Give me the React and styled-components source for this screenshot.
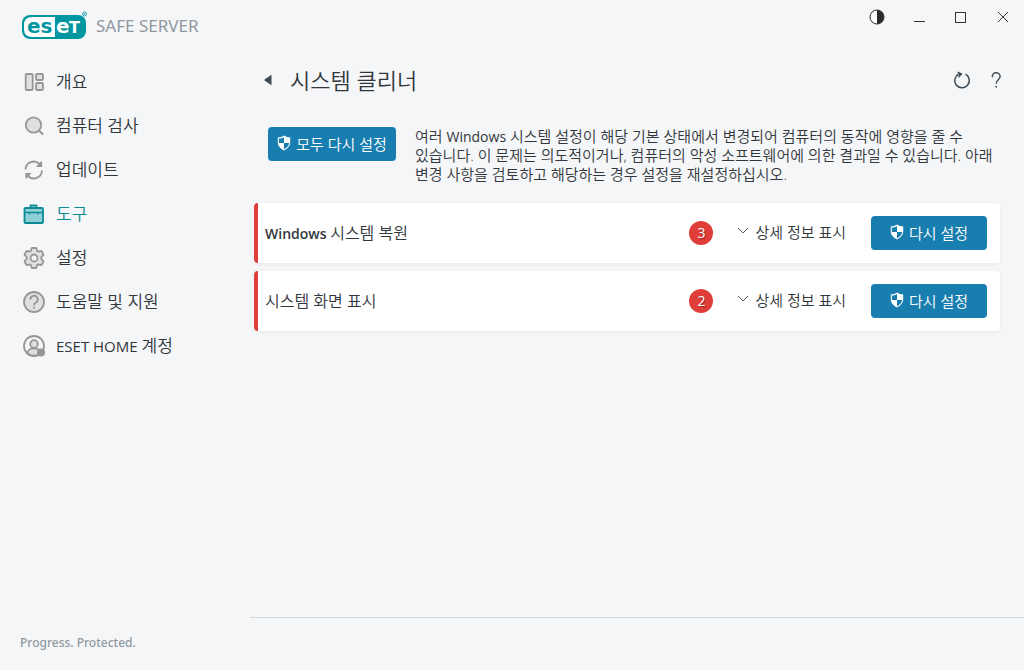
import React from 'react';
import styled, { createGlobalStyle } from 'styled-components';

const navItems = [
  { label: '개요', icon: OverviewIcon },
  { label: '컴퓨터 검사', icon: ScanIcon },
  { label: '업데이트', icon: UpdateIcon },
  { label: '도구', icon: ToolsIcon, active: true },
  { label: '설정', icon: SettingsIcon },
  { label: '도움말 및 지원', icon: SupportIcon },
  { latin: 'ESET HOME', label: '계정', icon: AccountIcon },
];

const groups = [
  { id: 'restore', latin: 'Windows', name: '시스템 복원', count: 3 },
  { id: 'display', name: '시스템 화면 표시', count: 2 },
];

function App() {
  return (
    <>
      <GlobalStyle />
      <Window>
        <TitleBar>
          <Brand>
            <Logo />
            <Product>SAFE SERVER</Product>
          </Brand>
          <WindowControls>
            <WindowButton aria-label="테마">
              <svg width="16" height="16" viewBox="0 0 16 16">
                <circle cx="8" cy="8" r="7" fill="#fff" stroke="#2b2b2b" />
                <path d="M8 1a7 7 0 0 1 0 14z" fill="#2b2b2b" />
              </svg>
            </WindowButton>
            <WindowButton aria-label="최소화">
              <svg width="12" height="12" viewBox="0 0 12 12">
                <path d="M1 10.5h11" stroke="#333" />
              </svg>
            </WindowButton>
            <WindowButton aria-label="최대화">
              <svg width="12" height="12" viewBox="0 0 12 12">
                <rect x=".5" y="1.5" width="10" height="10" fill="none" stroke="#333" />
              </svg>
            </WindowButton>
            <WindowButton aria-label="닫기">
              <svg width="12" height="12" viewBox="0 0 12 12">
                <path d="M1 1l10 10M11 1L1 11" stroke="#333" />
              </svg>
            </WindowButton>
          </WindowControls>
        </TitleBar>
        <Body>
          <Sidebar>
            <Nav>
              {navItems.map(({ latin, label, icon: Icon, active }) => (
                <NavLink key={label} href="#" $active={active}>
                  <Icon />
                  <span>
                    {latin && <Latin $size={15}>{latin} </Latin>}
                    {label}
                  </span>
                </NavLink>
              ))}
            </Nav>
            <Slogan>Progress. Protected.</Slogan>
          </Sidebar>
          <Main>
            <PageHead>
              <BackButton aria-label="뒤로">
                <svg width="8" height="12" viewBox="0 0 8 12">
                  <path d="M7.5 .8v10.4L.6 6.6q-.6-.6 0-1.2z" fill="#3b4a54" />
                </svg>
              </BackButton>
              <Title>시스템 클리너</Title>
              <HeadButton aria-label="새로 고침">
                <svg width="20" height="20" viewBox="0 0 20 20" fill="none" stroke="#3b4a54" strokeWidth="1.5">
                  <path d="M13.6 4.2A7.3 7.3 0 1 1 6.8 4" />
                  <path d="M5.5 2l4 2-3 3.2" strokeWidth="1.3" />
                  <path d="M6.3 2.6l3.2 1.4-2.2 2.3z" fill="#3b4a54" stroke="none" />
                </svg>
              </HeadButton>
              <HeadButton aria-label="도움말">
                <svg width="12" height="18" viewBox="0 0 12 18" fill="none" stroke="#3b4a54" strokeWidth="1.4">
                  <path d="M2.3 6.2v-.6a3.9 3.9 0 0 1 7.8 0c0 3-3.9 3.4-3.9 6.8v.4" />
                  <path d="M6.2 15v1.6" strokeWidth="1.6" />
                </svg>
              </HeadButton>
            </PageHead>
            <Intro>
              <Button>
                <ShieldIcon />
                모두 다시 설정
              </Button>
              <Description>
                여러 <Latin $size={14}>Windows</Latin> 시스템 설정이 해당 기본 상태에서 변경되어 컴퓨터의 동작에 영향을 줄 수
                있습니다. 이 문제는 의도적이거나, 컴퓨터의 악성 소프트웨어에 의한 결과일 수 있습니다. 아래
                변경 사항을 검토하고 해당하는 경우 설정을 재설정하십시오.
              </Description>
            </Intro>
            <Cards>
              {groups.map((group) => (
                <Card key={group.id}>
                  <CardName>
                    {group.latin && <strong>{group.latin} </strong>}
                    {group.name}
                  </CardName>
                  <Count>{group.count}</Count>
                  <DetailsButton>
                    <svg width="12" height="8" viewBox="0 0 12 8">
                      <path d="M1 1l5 5 5-5" fill="none" stroke="#5c6166" />
                    </svg>
                    상세 정보 표시
                  </DetailsButton>
                  <Button $wide>
                    <ShieldIcon />
                    다시 설정
                  </Button>
                </Card>
              ))}
            </Cards>
            <Footer />
          </Main>
        </Body>
      </Window>
    </>
  );
}

export default App;

function Logo() {
  return (
    <svg width="66" height="32" viewBox="0 0 66 32" role="img" aria-label="eset">
      <rect x="0" y="5" width="64" height="24" rx="8" fill="#0096a1" />
      <path d="M33 7H10q-8 0-8 8v4q0 8 8 8h23z" fill="#fff" />
      <g fontFamily="'DejaVu Sans', sans-serif" fontWeight="700" fontSize="20">
        <text x="5" y="23" fill="#0096a1">es</text>
        <text x="34" y="23" fill="#fff">e</text>
        <text x="47" y="23" fill="#fff" fontSize="16">T</text>
      </g>
      <circle cx="62.5" cy="4" r="2" fill="none" stroke="#0096a1" strokeWidth=".8" />
      <circle cx="62.5" cy="4" r=".8" fill="#0096a1" />
    </svg>
  );
}

function ShieldIcon() {
  return (
    <svg width="14" height="16" viewBox="0 0 14 16">
      <path d="M7 .6C5.2 1.9 3 2.5 .8 2.6v5c0 3.5 2.6 6.2 6.2 7.8 3.6-1.6 6.2-4.3 6.2-7.8v-5C11 2.5 8.8 1.9 7 .6z" fill="#fff" />
      <path d="M7 2v6H1.9V3.6C3.7 3.5 5.5 3 7 2z" fill="#187eb0" />
      <path d="M7 8h5.1c-.2 2.7-2.2 4.8-5.1 6.200z" fill="#187eb0" />
    </svg>
  );
}

function OverviewIcon() {
  return (
    <NavIcon viewBox="0 0 24 24">
      <rect x="3.7" y="4" width="7" height="16" rx="1" />
      <rect x="14" y="4" width="7" height="6" rx="1" />
      <rect x="14" y="13" width="7" height="7" rx="1" />
    </NavIcon>
  );
}

function ScanIcon() {
  return (
    <NavIcon viewBox="0 0 24 24">
      <circle cx="11.5" cy="11" r="7.7" />
      <path d="M17 16.5l4 4" strokeWidth="2.2" />
    </NavIcon>
  );
}

function UpdateIcon() {
  return (
    <NavIcon viewBox="0 0 24 24">
      <path d="M3.5 11.5A8.2 8.2 0 0 1 17.5 6M20 12.5A8.2 8.2 0 0 1 6 18" fill="none" />
      <path d="M19.5 4v4.5H15zM4 20v-4.500h4.500z" fill="#969696" strokeWidth="1.2" />
    </NavIcon>
  );
}

function ToolsIcon() {
  return (
    <NavIcon viewBox="0 0 24 24" $active>
      <path d="M8.5 6V3.500h6V6" fill="none" />
      <rect x="2.5" y="6" width="18.500" height="15" rx="1" />
      <path d="M2.5 10.5h18.500M7.500 10.500v2M16 10.500v2" strokeWidth="1.3" />
    </NavIcon>
  );
}

function SettingsIcon() {
  return (
    <NavIcon viewBox="0 0 24 24">
      <path d="M10.200 2h3.600q.7 0 .8.700l.4 2.200 1.500.8 2.100-.8q.7-.2 1 .4l1.700 3q.3.600-.2 1l-1.700 1.500v2.400l1.700 1.500q.5.400.2 1l-1.700 3q-.3.600-1 .4l-2.100-.8-1.500.8-.4 2.200q-.1.700-.8.700h-3.600q-.7 0-.8-.7L9 19.100l-1.500-.8-2.100.8q-.7.200-1-.4l-1.700-3q-.3-.6.200-1l1.700-1.500v-2.400L2.900 9.300q-.5-.4-.2-1l1.700-3q.3-.6 1-.4l2.100.8L9 4.900l.4-2.200q.1-.7.8-.7z" />
      <circle cx="12" cy="12" r="3.5" fill="#f5f6f8" />
    </NavIcon>
  );
}

function SupportIcon() {
  return (
    <NavIcon viewBox="0 0 24 24">
      <circle cx="12" cy="12" r="10" />
      <path d="M8.300 9.500a3.700 3.700 0 1 1 5.400 3.200c-1.200.6-1.700 1.100-1.700 2.500M12 16.800v1.600" fill="none" />
    </NavIcon>
  );
}

function AccountIcon() {
  return (
    <NavIcon viewBox="0 0 24 24">
      <circle cx="12" cy="12" r="10" fill="none" />
      <path d="M5.500 19.500c.2-3.200 2.600-5.200 6.500-5.200s6.300 2 6.500 5.200c-3.500 3-9.500 3-13 0z" />
      <circle cx="12" cy="10" r="3.800" />
      <circle cx="19" cy="18.500" r="4" fill="#969696" stroke="none" />
    </NavIcon>
  );
}

const GlobalStyle = createGlobalStyle`
  * {
    box-sizing: border-box;
  }

  body {
    margin: 0;
    background: #f5f6f8;
    color: #32373c;
    font-family: 'Open Sans', 'Noto Sans CJK KR', sans-serif;
    font-size: 15px;
    font-weight: 350;
  }

  button {
    padding: 0;
    border: 0;
    background: none;
    color: inherit;
    font: inherit;
    cursor: pointer;
  }
`;

const Window = styled.div`
  display: flex;
  flex-direction: column;
  min-height: 100vh;
`;

const TitleBar = styled.header`
  display: flex;
  justify-content: space-between;
  align-items: flex-start;
  height: 50px;
`;

const Brand = styled.div`
  display: flex;
  align-items: center;
  gap: 8px;
  padding: 9px 0 0 22px;
`;

const Product = styled.span`
  color: #90989f;
  font-family: 'Noto Sans', sans-serif;
  font-size: 17px;
  font-weight: 400;
  line-height: 34px;
`;

const WindowControls = styled.div`
  display: flex;
`;

const WindowButton = styled.button`
  display: flex;
  align-items: center;
  justify-content: center;
  width: 42px;
  height: 34px;

  &:hover {
    background: #e3e5e8;
  }
`;

const Body = styled.div`
  display: flex;
  flex: 1;
`;

const Sidebar = styled.aside`
  display: flex;
  flex-direction: column;
  justify-content: space-between;
  flex: 0 0 250px;
  padding: 10px 0 16px;
`;

const Nav = styled.nav`
  display: flex;
  flex-direction: column;
`;

const NavLink = styled.a`
  display: flex;
  align-items: center;
  gap: 10px;
  height: 44px;
  padding-left: 22px;
  color: ${(props) => (props.$active ? '#0b8a94' : 'inherit')};
  font-size: 17px;
  line-height: 22px;
  text-decoration: none;
`;

const NavIcon = styled.svg`
  width: 24px;
  height: 24px;
  fill: ${(props) => (props.$active ? '#8fd0d7' : '#dfe0e2')};
  stroke: ${(props) => (props.$active ? '#0b8a94' : '#969696')};
  stroke-width: 1.8;
  stroke-linejoin: round;
`;

const Latin = styled.span`
  font-size: ${(props) => props.$size}px;
  font-weight: 400;
  line-height: 1;
`;

const Slogan = styled.div`
  padding-left: 20px;
  color: #90989f;
  font-family: 'Noto Sans', sans-serif;
  font-size: 12px;
  font-weight: 500;
  line-height: 22px;
`;

const Main = styled.main`
  display: flex;
  flex-direction: column;
  flex: 1;
  min-width: 0;
  padding-top: 10px;
`;

const PageHead = styled.div`
  display: flex;
  align-items: center;
  height: 40px;
  padding: 0 11px 0 4px;
`;

const BackButton = styled.button`
  display: flex;
  align-items: center;
  justify-content: center;
  width: 28px;
  height: 28px;
`;

const Title = styled.h1`
  flex: 1;
  margin: 0;
  padding-left: 8px;
  font-size: 22px;
  font-weight: 350;
  line-height: 26px;
`;

const HeadButton = styled.button`
  display: flex;
  align-items: center;
  justify-content: center;
  width: 34px;
  height: 34px;
`;

const Intro = styled.div`
  display: flex;
  align-items: flex-start;
  gap: 19px;
  padding: 27px 20px 0 18px;
`;

const Button = styled.button`
  display: flex;
  align-items: center;
  justify-content: center;
  gap: 5px;
  flex: none;
  width: ${(props) => (props.$wide ? '116px' : '128px')};
  height: 34px;
  padding-bottom: 2px;
  border-radius: 4px;
  background: #187eb0;
  color: #fff;

  &:hover {
    background: #136a95;
  }
`;

const Description = styled.p`
  flex: 1;
  margin: 0;
  line-height: 19px;
  word-break: keep-all;
`;

const Cards = styled.div`
  display: flex;
  flex-direction: column;
  gap: 8px;
  padding: 19px 24px 0 4px;
`;

const Card = styled.section`
  display: flex;
  align-items: center;
  height: 60px;
  padding: 0 13px 0 7px;
  border-left: 4px solid #e03e38;
  border-radius: 4px;
  background: #fff;
  box-shadow: 0 1px 4px rgba(0, 0, 0, 0.06);
`;

const CardName = styled.h2`
  flex: 1;
  margin: 0;
  font-size: 16px;
  font-weight: 350;
  line-height: 22px;

  strong {
    font-size: 14px;
    font-weight: 600;
  }
`;

const Count = styled.span`
  width: 24px;
  margin-right: 24px;
  border-radius: 12px;
  background: #e03e38;
  color: #fff;
  font-size: 14px;
  font-weight: 400;
  line-height: 24px;
  text-align: center;
  text-shadow: 1px 1px 1px rgba(0, 0, 0, 0.4);
`;

const DetailsButton = styled.button`
  display: flex;
  align-items: center;
  gap: 6px;
  margin-right: 25px;
  padding-bottom: 4px;
`;

const Footer = styled.footer`
  height: 53px;
  margin-top: auto;
  border-top: 1px solid #d2d5d8;
`;
